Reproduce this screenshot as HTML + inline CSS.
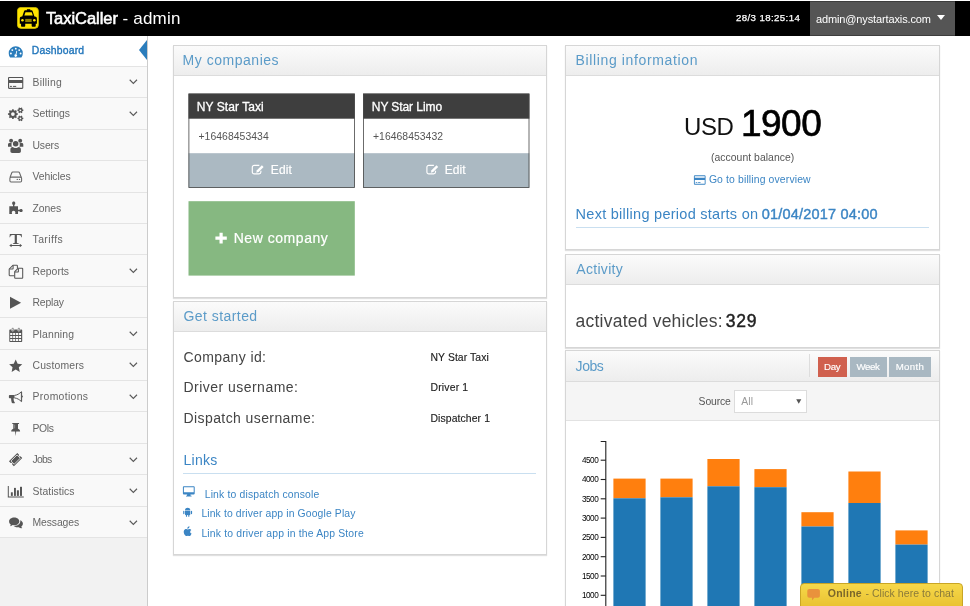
<!DOCTYPE html>
<html lang="en"><head><meta charset="utf-8"><title>TaxiCaller - admin</title>
<style>
html,body{margin:0;padding:0;}
body{width:970px;height:606px;overflow:hidden;background:#fff;font-family:"Liberation Sans",sans-serif;position:relative;}
.abs{position:absolute;}
.t{position:absolute;white-space:nowrap;line-height:1;}
#top{z-index:5;position:absolute;left:0;top:1px;width:970px;height:35px;background:#000;}
#user{position:absolute;left:810px;top:0;width:144.5px;height:35px;background:#555;box-sizing:border-box;border-top:1px solid #3d3d3d;border-bottom:1px solid #3d3d3d;}
#caret{position:absolute;left:936.6px;top:14px;width:0;height:0;border-left:4.6px solid transparent;border-right:4.6px solid transparent;border-top:5.6px solid #fff;}
#logo{position:absolute;left:17.2px;top:6px;width:21.8px;height:21.8px;}
#side{position:absolute;left:0;top:35px;width:147px;height:571px;background:#f2f2f2;border-right:1px solid #ccc;}
.row{position:absolute;left:0;width:147px;height:30.46px;background:#f9f9f9;border-bottom:1px solid #e4e4e4;}
.row.act{background:#fff;}
.row svg.ic{position:absolute;left:7px;top:7.5px;width:17px;height:17px;overflow:visible;}
.row svg.ch{position:absolute;left:128.5px;top:12.6px;width:9px;height:6px;}
#tri{position:absolute;left:139px;top:4.6px;width:0;height:0;border-top:10.75px solid transparent;border-bottom:10.75px solid transparent;border-right:8.2px solid #2b7dbc;}
.panel{position:absolute;background:#fff;border:1px solid #d6d6d6;box-sizing:border-box;box-shadow:0 1px 1px rgba(0,0,0,0.12);}
.ph{position:absolute;left:0;top:0;right:0;height:29px;border-bottom:1px solid #dcdcdc;background:linear-gradient(#fbfbfb,#ededed);}
.card{position:absolute;width:167px;height:94px;box-sizing:border-box;border:1px solid #444;background:#fff;}
.card .hd{position:absolute;left:0;top:0;right:0;height:24.5px;background:#3e3e3e;}
.card .ft{position:absolute;left:0;top:58.5px;right:0;bottom:0;background:#abb9c2;}
#newc{position:absolute;left:188px;top:201px;width:167px;height:74.5px;background:#86b881;}
.hr{position:absolute;height:1px;background:#c9dff0;}
.btn{position:absolute;top:357px;height:20px;}
#tool{position:absolute;left:566px;top:382px;width:373px;height:39px;background:#f5f5f5;border-bottom:1px solid #e2e2e2;box-sizing:border-box;}
#sel{position:absolute;left:733.5px;top:390.3px;width:73px;height:23px;box-sizing:border-box;border:1px solid #dcdcdc;background:#fff;}
#chat{position:absolute;left:799.5px;top:582.5px;width:163.5px;height:30px;box-sizing:border-box;border:1px solid #c9a525;border-radius:4px 4px 0 0;background:linear-gradient(#f6d84a,#e6bd2c);}
#texts{position:absolute;left:0;top:0;z-index:10;will-change:transform;}

</style></head>
<body>
<div id="side"></div>
<div id="top"><div id="user"></div><div id="caret"></div>
<svg id="logo" viewBox="0 0 22 22"><rect x="0.4" y="0.4" width="21.2" height="21.2" rx="3.6" fill="#ffe500" stroke="#d4bf00" stroke-width=".8"/>
<path d="M10 2.300h3.400v1h1.300c.5 0 .8.200 1 .7l1.900 5.500h.5c1.100 0 2 .9 2 2v5.400h-1.200v2.100c0 .6-.4 1-1 1h-2.100c-.6 0-1-.4-1-1v-2.100H8.300v2.100c0 .6-.4 1-1 1H5.100c-.6 0-1-.4-1-1v-2.100H2.800v-5.400c0-1.100.9-2 2-2h.5l1.900-5.500c.2-.5.500-.7 1-.7H10z" fill="#000"/>
<path d="M8.500 5.200h6.400l1.100 3.300H7.400z" fill="#ffe500"/><circle cx="5.500" cy="13.400" r="1.300" fill="#ffe500"/><circle cx="17.500" cy="13.400" r="1.300" fill="#ffe500"/><rect x="8.300" y="12" width="6.500" height="3.200" fill="#8f7f00"/></svg>
</div>
<div class="row act" style="top:35px;height:31px;color:#2b7dbc;"><svg class="ic" style="top:7.50px" viewBox="0 0 17 17" fill="currentColor"><g transform="translate(0 -0.4)"><path d="M1.700 10.700a7.050 7.050 0 0 1 14.100 0c0 1.500-.45 2.900-1.200 4.050a.6.600 0 0 1-.5.250H3.400a.6.600 0 0 1-.5-.25C2.150 13.600 1.700 12.200 1.700 10.700z"/><g fill="#fff"><circle cx="3.900" cy="10.900" r=".95"/><circle cx="5.300" cy="7.500" r=".95"/><circle cx="8.750" cy="6.050" r=".95"/><circle cx="12.200" cy="7.500" r=".95"/><circle cx="13.600" cy="10.900" r=".95"/><path d="M9.400 8.100l.8.200-.75 3.500a1.350 1.350 0 1 1-.85-.2z"/></g></g></svg><div id="tri" style="top:4.60px"></div></div>
<div class="row" style="top:67px;height:30px;color:#555;"><svg class="ic" style="top:6.96px" viewBox="0 0 17 17" fill="currentColor"><path fill-rule="evenodd" d="M2.200 2.900h12.900c.7 0 1.200.5 1.200 1.200v9.600c0 .7-.5 1.200-1.200 1.200H2.200c-.7 0-1.200-.5-1.200-1.200V4.100c0-.7.500-1.200 1.200-1.200zM2.100 4v2h13.100V4zM2.100 8.900v4.900h13.100V8.900z"/><rect x="2.900" y="11.900" width="2" height="1"/><rect x="5.900" y="11.900" width="3.300" height="1"/></svg><svg class="ch" style="top:12.06px" viewBox="0 0 9 6"><path d="M0.700 0.750L4.350 4.400L8 0.750" fill="none" stroke="#5a5a5a" stroke-width="1.100"/></svg></div>
<div class="row" style="top:98px;height:31px;color:#555;"><svg class="ic" style="top:7.42px" viewBox="0 0 17 17" fill="currentColor"><path fill-rule="evenodd" d="M9.70 8.23L10.84 8.33L10.84 9.87L9.70 9.97L9.20 11.17L9.94 12.05L8.85 13.14L7.97 12.40L6.77 12.90L6.67 14.04L5.13 14.04L5.03 12.90L3.83 12.40L2.95 13.14L1.86 12.05L2.60 11.17L2.10 9.97L0.96 9.87L0.96 8.33L2.10 8.23L2.60 7.03L1.86 6.15L2.95 5.06L3.83 5.80L5.03 5.30L5.13 4.16L6.67 4.16L6.77 5.30L7.97 5.80L8.85 5.06L9.94 6.15L9.20 7.03ZM4.05 9.10a1.85 1.85 0 1 0 3.7 0a1.85 1.85 0 1 0 -3.7 0Z"/><path fill-rule="evenodd" d="M15.53 4.56L16.32 4.61L16.32 5.99L15.53 6.04L15.10 6.77L15.45 7.49L14.27 8.17L13.82 7.51L12.98 7.51L12.53 8.17L11.35 7.49L11.70 6.77L11.27 6.04L10.48 5.99L10.48 4.61L11.27 4.56L11.70 3.83L11.35 3.11L12.53 2.43L12.98 3.09L13.82 3.09L14.27 2.43L15.45 3.11L15.10 3.83ZM12.50 5.30a0.9 0.9 0 1 0 1.8 0a0.9 0.9 0 1 0 -1.8 0Z"/><path fill-rule="evenodd" d="M15.53 12.66L16.32 12.71L16.32 14.09L15.53 14.14L15.10 14.87L15.45 15.59L14.27 16.27L13.82 15.61L12.98 15.61L12.53 16.27L11.35 15.59L11.70 14.87L11.27 14.14L10.48 14.09L10.48 12.71L11.27 12.66L11.70 11.93L11.35 11.21L12.53 10.53L12.98 11.19L13.82 11.19L14.27 10.53L15.45 11.21L15.10 11.93ZM12.50 13.40a0.9 0.9 0 1 0 1.8 0a0.9 0.9 0 1 0 -1.8 0Z"/></svg><svg class="ch" style="top:12.52px" viewBox="0 0 9 6"><path d="M0.700 0.750L4.350 4.400L8 0.750" fill="none" stroke="#5a5a5a" stroke-width="1.100"/></svg></div>
<div class="row" style="top:130px;height:30px;color:#555;"><svg class="ic" style="top:6.88px" viewBox="0 0 17 17" fill="currentColor"><circle cx="4.100" cy="3.700" r="1.950"/><circle cx="13.200" cy="3.700" r="1.950"/><path d="M1 9.700V7.600c0-.8.600-1.500 1.400-1.500h1.300c.5 0 .9.200 1.200.5-.6 1-.5 2.100 0 3.100z"/><path d="M16.300 9.700V7.600c0-.8-.6-1.500-1.400-1.500h-1.300c-.5 0-.9.200-1.200.5.600 1 .5 2.100 0 3.100z"/><circle cx="8.650" cy="6.700" r="2.750"/><path d="M3.400 14.300v-2c0-1.400.9-2.400 2.200-2.400.3 0 1.500 1.100 3.050 1.100s2.750-1.100 3.050-1.100c1.300 0 2.200 1 2.200 2.400v2c0 1-.8 1.700-1.700 1.700H5.100c-.9 0-1.700-.7-1.700-1.700z"/></svg></div>
<div class="row" style="top:161px;height:31px;color:#555;"><svg class="ic" style="top:7.34px" viewBox="0 0 17 17" fill="currentColor"><g fill="none" stroke="#666" stroke-width="1.050"><path d="M3.100 9.200l1.700-4.500c.2-.5.500-.700 1-.7h5.700c.5 0 .8.200 1 .7l1.700 4.500"/><rect x="2.900" y="9.100" width="11.700" height="4.800" rx="1.100"/></g><circle cx="10.300" cy="11.400" r=".7" fill="#666"/><circle cx="12.500" cy="11.400" r=".7" fill="#666"/></svg></div>
<div class="row" style="top:193px;height:30px;color:#555;"><svg class="ic" style="top:6.80px" viewBox="0 0 17 17" fill="currentColor"><path d="M2.300 6.200h3.700V5c-.6-.4-.9-1-.9-1.700 0-1 .7-1.700 1.600-1.700s1.600.7 1.600 1.700c0 .7-.3 1.300-.9 1.700v1.200H11v3.600h1.400c.4-.6.900-.9 1.600-.9 1 0 1.700.7 1.700 1.600s-.7 1.600-1.700 1.600c-.7 0-1.200-.3-1.600-.9H11V14H8.100c.2-.4.300-.8.300-1.200 0-1.200-.8-2-1.800-2s-1.800.8-1.800 2c0 .4.100.8.300 1.200H2.300z"/></svg></div>
<div class="row" style="top:224px;height:30px;color:#555;"><svg class="ic" style="top:7.26px" viewBox="0 0 17 17" fill="currentColor"><path d="M2.500 6.300l.35-3.300h11.800l.35 3.300h-.6c-.3-1.600-.9-2.300-2.400-2.300H9.900v7.200c0 .8.300 1 1.800 1.100v.6H5.900v-.6c1.500-.1 1.800-.3 1.800-1.100V4H5.500C4 4 3.400 4.700 3.100 6.300z"/><path d="M2.300 14.500l2.300-1.700v1.200h8.200v-1.200l2.300 1.700-2.300 1.700V15H4.600v1.200z"/></svg></div>
<div class="row" style="top:255px;height:31px;color:#555;"><svg class="ic" style="top:7.72px" viewBox="0 0 17 17" fill="currentColor"><g fill="none" stroke="#555" stroke-width="1.050" stroke-linejoin="round"><path d="M7.400 12.700H2.800c-.4 0-.6-.2-.6-.6V6l3.700-3.700h3.900c.4 0 .6.200.6.600v2.500"/><path d="M2.400 6h3.300c.3 0 .4-.1.400-.4V2.500"/><path d="M7.700 8.700L11.200 5.200h3.900c.4 0 .6.200.6.600v8.900c0 .4-.2.600-.6.600H8.300c-.4 0-.6-.2-.6-.6z"/><path d="M7.900 8.900h3.100c.3 0 .4-.1.400-.4V5.400"/></g></svg><svg class="ch" style="top:12.82px" viewBox="0 0 9 6"><path d="M0.700 0.750L4.350 4.400L8 0.750" fill="none" stroke="#5a5a5a" stroke-width="1.100"/></svg></div>
<div class="row" style="top:287px;height:30px;color:#555;"><svg class="ic" style="top:7.18px" viewBox="0 0 17 17" fill="currentColor"><path d="M3 2.800L14.100 8.800L3 14.800z"/></svg></div>
<div class="row" style="top:318px;height:31px;color:#555;"><svg class="ic" style="top:7.64px" viewBox="0 0 17 17" fill="currentColor"><path fill-rule="evenodd" d="M3.300 3.400h10.900c.6 0 1 .4 1 1V15c0 .6-.4 1-1 1H3.300c-.6 0-1-.4-1-1V4.400c0-.6.400-1 1-1zM3.2 6.9h2.200v2.200h-2.200zM6.1 6.9h2.200v2.200h-2.200zM9.0 6.9h2.200v2.200h-2.200zM11.9 6.9h2.200v2.200h-2.200zM3.2 9.9h2.200v2.200h-2.200zM6.1 9.9h2.200v2.200h-2.200zM9.0 9.9h2.200v2.200h-2.200zM11.9 9.9h2.200v2.200h-2.200zM3.2 12.9h2.200v2.200h-2.200zM6.1 12.9h2.200v2.200h-2.200zM9.0 12.9h2.200v2.200h-2.200zM11.9 12.9h2.200v2.200h-2.200z"/><rect x="4.600" y="1.800" width="2.300" height="3.500" rx="1.100" fill="#555" stroke="#f9f9f9" stroke-width=".5"/><rect x="10.700" y="1.800" width="2.300" height="3.500" rx="1.100" fill="#555" stroke="#f9f9f9" stroke-width=".5"/><rect x="5.300" y="2.600" width=".9" height="2" rx=".4" fill="#f9f9f9"/><rect x="11.400" y="2.600" width=".9" height="2" rx=".4" fill="#f9f9f9"/></svg><svg class="ch" style="top:12.74px" viewBox="0 0 9 6"><path d="M0.700 0.750L4.350 4.400L8 0.750" fill="none" stroke="#5a5a5a" stroke-width="1.100"/></svg></div>
<div class="row" style="top:350px;height:30px;color:#555;"><svg class="ic" style="top:7.10px" viewBox="0 0 17 17" fill="currentColor"><path d="M8.70 2.40L10.64 6.63L15.26 7.17L11.84 10.32L12.76 14.88L8.70 12.60L4.64 14.88L5.56 10.32L2.14 7.17L6.76 6.63Z"/></svg><svg class="ch" style="top:12.20px" viewBox="0 0 9 6"><path d="M0.700 0.750L4.350 4.400L8 0.750" fill="none" stroke="#5a5a5a" stroke-width="1.100"/></svg></div>
<div class="row" style="top:381px;height:30px;color:#555;"><svg class="ic" style="top:7.56px" viewBox="0 0 17 17" fill="currentColor"><path d="M2.900 6h4.600v3.300H2.900c-.6 0-1-.4-1-1V7c0-.6.400-1 1-1z"/><path d="M4.100 9.100h2.500c0 1.700.2 3.200 1.200 4.400.3.400 0 .8-.5.800H5.700c-.5 0-.8-.2-1-.7-.5-1.500-.6-3-.6-4.500z"/><path d="M7.500 6.400c2.700-.3 4.900-1.700 6.900-3.600v9.700c-2-1.900-4.200-3.300-6.900-3.600" fill="none" stroke="#555" stroke-width="1"/><path d="M14.400 2.400c.4 0 .7.300.7.700v3.500c.5.100.8.500.8 1s-.3.900-.8 1v3.600c0 .4-.3.700-.7.700z"/></svg><svg class="ch" style="top:12.66px" viewBox="0 0 9 6"><path d="M0.700 0.750L4.350 4.400L8 0.750" fill="none" stroke="#5a5a5a" stroke-width="1.100"/></svg></div>
<div class="row" style="top:412px;height:31px;color:#555;"><svg class="ic" style="top:8.02px" viewBox="0 0 17 17" fill="currentColor"><path d="M5.500 3h6.300c.4 0 .4 1.100 0 1.100h-.8v4.700c1.300.6 2.100 1.500 2.100 2.500 0 .2-.1.300-.3.300H9.200l-.5 4.100h-.1l-.5-4.100H4.500c-.2 0-.3-.1-.3-.3 0-1 .8-1.900 2.100-2.500V4.100h-.8c-.4 0-.4-1.100 0-1.100z"/><rect x="7.300" y="4.600" width=".8" height="3.800" fill="#999"/></svg></div>
<div class="row" style="top:444px;height:30px;color:#555;"><svg class="ic" style="top:7.48px" viewBox="0 0 17 17" fill="currentColor"><g transform="translate(8.600 8.600) rotate(-45)"><path d="M-5.900 -3.500H5.900V-1a1 1 0 0 0 0 2V3.500H-5.900V1a1 1 0 0 0 0-2z"/><rect x="-4.300" y="-2.300" width="8.600" height="4.600" fill="none" stroke="#f9f9f9" stroke-width=".75"/></g></svg><svg class="ch" style="top:12.58px" viewBox="0 0 9 6"><path d="M0.700 0.750L4.350 4.400L8 0.750" fill="none" stroke="#5a5a5a" stroke-width="1.100"/></svg></div>
<div class="row" style="top:475px;height:31px;color:#555;"><svg class="ic" style="top:7.94px" viewBox="0 0 17 17" fill="currentColor"><path d="M.800 2.900h1v10.700h15v1H.800z"/><rect x="3.900" y="9.300" width="1.900" height="3.600"/><rect x="7" y="4.900" width="1.900" height="8"/><rect x="9.900" y="7.300" width="2" height="5.600"/><rect x="13" y="3.800" width="2" height="9.100"/></svg><svg class="ch" style="top:13.04px" viewBox="0 0 9 6"><path d="M0.700 0.750L4.350 4.400L8 0.750" fill="none" stroke="#5a5a5a" stroke-width="1.100"/></svg></div>
<div class="row" style="top:507px;height:30px;color:#555;"><svg class="ic" style="top:7.40px" viewBox="0 0 17 17" fill="currentColor"><path d="M14.500 14.300c-1.200-.1-2-.5-2.600-1.100-.5.100-1 .15-1.500.15-1.700 0-3.200-.6-4.100-1.500.3 0 .6.050.9.050 3.400 0 6.100-2.100 6.100-4.700 0-.3 0-.6-.1-.9 1.600.7 2.700 1.900 2.700 3.400 0 1.100-.6 2-1.600 2.700.1.700.5 1.300 1 1.700z"/><path d="M7.200 3.600c2.800 0 5.100 1.700 5.100 3.800s-2.300 3.800-5.100 3.800c-.5 0-1-.05-1.500-.15-.7.700-1.600 1.100-2.800 1.300.5-.5.800-1.100.9-1.900C2.700 9.800 2.100 8.700 2.100 7.400c0-2.100 2.300-3.800 5.100-3.800z"/></svg><svg class="ch" style="top:12.50px" viewBox="0 0 9 6"><path d="M0.700 0.750L4.350 4.400L8 0.750" fill="none" stroke="#5a5a5a" stroke-width="1.100"/></svg></div>
<div class="panel" style="left:173px;top:45px;width:374px;height:253px;"><div class="ph"></div></div>
<div class="panel" style="left:173px;top:301px;width:374px;height:254px;"><div class="ph"></div></div>
<div class="panel" style="left:565px;top:45px;width:375px;height:205px;"><div class="ph"></div></div>
<div class="panel" style="left:565px;top:254px;width:375px;height:94px;"><div class="ph"></div></div>
<div class="panel" style="left:565px;top:350px;width:375px;height:300px;"><div class="ph" style="height:30px"></div></div>

<div class="hr" style="left:183px;top:473px;width:353px;"></div>
<div class="hr" style="left:576px;top:227px;width:353px;"></div>

<div id="tool"></div>
<div id="sel"></div>
<div class="abs" style="left:809px;top:354px;width:1px;height:23px;background:#ddd;"></div>
<div class="btn" style="left:817.5px;width:29px;background:#d0604e;"></div>
<div class="btn" style="left:850px;width:36.700px;background:#a9b8c2;"></div>
<div class="btn" style="left:889.2px;width:41.500px;background:#a9b8c2;"></div>
<svg class="abs" style="left:0;top:0;" width="970" height="606" viewBox="0 0 970 606"><rect x="613.4" y="478.6" width="32.200" height="19.7" fill="#ff7f0e"/><rect x="613.4" y="498.3" width="32.200" height="141.7" fill="#1f77b4"/><rect x="660.4" y="478.6" width="32.200" height="18.7" fill="#ff7f0e"/><rect x="660.4" y="497.3" width="32.200" height="142.7" fill="#1f77b4"/><rect x="707.4" y="459.0" width="32.200" height="27.3" fill="#ff7f0e"/><rect x="707.4" y="486.3" width="32.200" height="153.7" fill="#1f77b4"/><rect x="754.4" y="469.1" width="32.200" height="18.1" fill="#ff7f0e"/><rect x="754.4" y="487.2" width="32.200" height="152.8" fill="#1f77b4"/><rect x="801.4" y="512.2" width="32.200" height="14.3" fill="#ff7f0e"/><rect x="801.4" y="526.5" width="32.200" height="113.5" fill="#1f77b4"/><rect x="848.4" y="471.5" width="32.200" height="31.5" fill="#ff7f0e"/><rect x="848.4" y="503.0" width="32.200" height="137.0" fill="#1f77b4"/><rect x="895.4" y="530.4" width="32.200" height="14.2" fill="#ff7f0e"/><rect x="895.4" y="544.6" width="32.200" height="95.4" fill="#1f77b4"/><path d="M600.700 441.500H605.800V640" fill="none" stroke="#222" stroke-width="1.100"/><path d="M600.700 595.3H605.800" stroke="#222" stroke-width="1.100"/><path d="M600.700 576.0H605.800" stroke="#222" stroke-width="1.100"/><path d="M600.700 556.7H605.800" stroke="#222" stroke-width="1.100"/><path d="M600.700 537.4H605.800" stroke="#222" stroke-width="1.100"/><path d="M600.700 518.1H605.800" stroke="#222" stroke-width="1.100"/><path d="M600.700 498.8H605.800" stroke="#222" stroke-width="1.100"/><path d="M600.700 479.5H605.800" stroke="#222" stroke-width="1.100"/><path d="M600.700 460.2H605.800" stroke="#222" stroke-width="1.100"/></svg><svg class="abs" style="left:0;top:0;z-index:8;" width="970" height="606" viewBox="0 0 970 606"><g transform="translate(0 0)"><rect x="188.500" y="93.600" width="166.300" height="94.200" fill="#fff"/><rect x="188.500" y="93.600" width="166.300" height="25.100" fill="#3e3e3e"/><rect x="188.500" y="153.200" width="166.300" height="34.600" fill="#abb9c2"/><rect x="188.900" y="94" width="165.500" height="93.400" fill="none" stroke="#474747" stroke-width=".8"/></g><g transform="translate(174.6 0)"><rect x="188.500" y="93.600" width="166.300" height="94.200" fill="#fff"/><rect x="188.500" y="93.600" width="166.300" height="25.100" fill="#3e3e3e"/><rect x="188.500" y="153.200" width="166.300" height="34.600" fill="#abb9c2"/><rect x="188.900" y="94" width="165.500" height="93.400" fill="none" stroke="#474747" stroke-width=".8"/></g><rect x="188.500" y="201.200" width="166.300" height="74.400" fill="#86b881"/><g transform="translate(0 0)"><path d="M259.300 165.400H254.200a1.900 1.900 0 0 0-1.900 1.900V172a1.900 1.900 0 0 0 1.900 1.900H259a1.900 1.900 0 0 0 1.900-1.900V170.700" fill="none" stroke="#fff" stroke-width="1.150"/><path d="M261.900 165.300l1.700 1.700-5 5-2.400.7.700-2.400z" fill="#fff"/></g><g transform="translate(174.6 0)"><path d="M259.300 165.400H254.200a1.900 1.900 0 0 0-1.900 1.900V172a1.900 1.900 0 0 0 1.900 1.900H259a1.900 1.900 0 0 0 1.900-1.900V170.700" fill="none" stroke="#fff" stroke-width="1.150"/><path d="M261.900 165.300l1.700 1.700-5 5-2.400.7.700-2.400z" fill="#fff"/></g><path d="M219.500 232.800h3.200v3.700h4.100v3.200h-4.100v3.800h-3.200v-3.800h-4.100v-3.200h4.100z" fill="#fff"/><path fill-rule="evenodd" fill="#3b85c4" d="M694.800 175.300h9.900c.5 0 .9.400.9.900v7.600c0 .5-.4.900-.9.900h-9.900c-.5 0-.9-.4-.9-.9v-7.600c0-.5.400-.9.900-.9zM694.800 176.200v1.500h9.900v-1.500zM694.800 179.900v3.900h9.900v-3.900z"/><rect x="695.700" y="182" width="1.600" height=".8" fill="#3b85c4"/><rect x="698.100" y="182" width="2.400" height=".8" fill="#3b85c4"/><path fill-rule="evenodd" fill="#3b85c4" d="M183.800 486.200h10c.5 0 .9.400.9.900v6.500c0 .5-.4.900-.9.900h-3.400l.3 1.300h.9v.8h-5.600v-.8h.9l.3-1.300h-3.400c-.5 0-.9-.4-.9-.9v-6.500c0-.5.400-.9.900-.9zM183.900 487.200v5h9.800v-5z"/><path fill="#3b85c4" d="M185 510.300a2.650 2.600 0 0 1 5.300 0zM185 510.700h5.300v3.700c0 .3-.2.500-.5.500h-.4v1.300a.6.600 0 0 1-1.200 0v-1.300h-1.100v1.300a.6.600 0 0 1-1.200 0v-1.300h-.4c-.3 0-.5-.2-.5-.5zM183.200 511.300a.6.600 0 0 1 1.200 0v2.300a.6.600 0 0 1-1.200 0zM190.900 511.300a.6.600 0 0 1 1.200 0v2.300a.6.600 0 0 1-1.200 0z"/><path fill="#3b85c4" d="M189.500 526.300c.1.700-.2 1.300-.6 1.700-.4.500-1 .8-1.600.7-.1-.6.200-1.300.6-1.700.4-.4 1.100-.7 1.600-.7zM191.300 529.900c-.7.400-1.100 1-1.100 1.800 0 .9.500 1.600 1.400 1.900-.2.600-.5 1.100-.9 1.600-.4.500-.8.900-1.400.9-.6 0-.8-.4-1.500-.4s-.9.400-1.500.4-1-.5-1.400-1c-.9-1.100-1.500-3-1-4.400.4-1 1.300-1.700 2.300-1.700.6 0 1.200.4 1.600.4.400 0 1.100-.5 1.900-.4.600 0 1.200.3 1.600.9z"/><path fill="#e9923c" d="M809.300 589h8.600c1.100 0 2 .9 2 2v4.700c0 1.100-.9 2-2 2h-3.600l-2.300 2.700v-2.700h-2.700c-1.100 0-2-.9-2-2V591c0-1.100.9-2 2-2z"/><path fill="#555" d="M796.200 399.200h5.100l-2.550 4.600z"/></svg>
<div id="chat"></div>

<div id="texts">
<span class="t" id="t0" style="left:45.90px;top:9.93px;font-size:16.5px;color:#fff;-webkit-text-stroke:0.55px #fff;letter-spacing:-0.04px;">TaxiCaller</span>
<span class="t" id="t1" style="left:122.50px;top:9.51px;font-size:17px;color:#fff;letter-spacing:0.20px;">- admin</span>
<span class="t" id="t2" style="left:736.00px;top:12.89px;font-size:9.7px;color:#fff;-webkit-text-stroke:0.25px #fff;letter-spacing:0.38px;">28/3 18:25:14</span>
<span class="t" id="t3" style="left:815.90px;top:14.39px;font-size:11px;color:#fff;letter-spacing:-0.12px;">admin@nystartaxis.com</span>
<span class="t" id="t4" style="left:31.83px;top:46.00px;font-size:10.4px;color:#2075bb;-webkit-text-stroke:0.35px #2075bb;letter-spacing:0.18px;">Dashboard</span>
<span class="t" id="t5" style="left:32.50px;top:78.06px;font-size:10.4px;color:#666;letter-spacing:0.25px;">Billing</span>
<span class="t" id="t6" style="left:32.50px;top:108.52px;font-size:10.4px;color:#666;">Settings</span>
<span class="t" id="t7" style="left:32.50px;top:140.98px;font-size:10.4px;color:#666;letter-spacing:-0.14px;">Users</span>
<span class="t" id="t8" style="left:32.50px;top:172.44px;font-size:10.4px;color:#666;letter-spacing:-0.09px;">Vehicles</span>
<span class="t" id="t9" style="left:32.50px;top:203.90px;font-size:10.4px;color:#666;letter-spacing:-0.06px;">Zones</span>
<span class="t" id="t10" style="left:32.50px;top:235.36px;font-size:10.4px;color:#666;letter-spacing:0.44px;">Tariffs</span>
<span class="t" id="t11" style="left:32.50px;top:266.82px;font-size:10.4px;color:#666;letter-spacing:0.02px;">Reports</span>
<span class="t" id="t12" style="left:32.50px;top:298.28px;font-size:10.4px;color:#666;letter-spacing:-0.16px;">Replay</span>
<span class="t" id="t13" style="left:32.50px;top:329.74px;font-size:10.4px;color:#666;letter-spacing:0.15px;">Planning</span>
<span class="t" id="t14" style="left:32.50px;top:361.20px;font-size:10.4px;color:#666;letter-spacing:0.16px;">Customers</span>
<span class="t" id="t15" style="left:32.50px;top:391.66px;font-size:10.4px;color:#666;letter-spacing:0.32px;">Promotions</span>
<span class="t" id="t16" style="left:32.50px;top:424.12px;font-size:10.4px;color:#666;letter-spacing:-0.55px;">POIs</span>
<span class="t" id="t17" style="left:32.50px;top:454.58px;font-size:10.4px;color:#666;letter-spacing:-0.76px;">Jobs</span>
<span class="t" id="t18" style="left:32.50px;top:487.04px;font-size:10.4px;color:#666;letter-spacing:0.04px;">Statistics</span>
<span class="t" id="t19" style="left:32.50px;top:517.50px;font-size:10.4px;color:#666;letter-spacing:-0.11px;">Messages</span>
<span class="t" id="t20" style="left:182.60px;top:53.05px;font-size:14px;color:#5b9bc8;letter-spacing:0.52px;">My companies</span>
<span class="t" id="t21" style="left:575.60px;top:53.05px;font-size:14px;color:#5b9bc8;letter-spacing:0.63px;">Billing information</span>
<span class="t" id="t22" style="left:183.50px;top:309.15px;font-size:14px;color:#5b9bc8;letter-spacing:0.44px;">Get started</span>
<span class="t" id="t23" style="left:576.30px;top:261.55px;font-size:14px;color:#5b9bc8;letter-spacing:0.31px;">Activity</span>
<span class="t" id="t24" style="left:575.60px;top:358.95px;font-size:14px;color:#5b9bc8;letter-spacing:-0.44px;">Jobs</span>
<span class="t" id="t25" style="left:183.50px;top:452.85px;font-size:14px;color:#3b85c4;letter-spacing:0.29px;">Links</span>
<span class="t" id="t26" style="left:196.85px;top:100.84px;font-size:12px;color:#fff;-webkit-text-stroke:0.3px #fff;letter-spacing:0.06px;">NY Star Taxi</span>
<span class="t" id="t27" style="left:371.80px;top:100.84px;font-size:12px;color:#fff;-webkit-text-stroke:0.3px #fff;letter-spacing:-0.08px;">NY Star Limo</span>
<span class="t" id="t28" style="left:198.50px;top:132.20px;font-size:10.4px;color:#555;letter-spacing:0.05px;">+16468453434</span>
<span class="t" id="t29" style="left:373.00px;top:132.20px;font-size:10.4px;color:#555;letter-spacing:0.03px;">+16468453432</span>
<span class="t" id="t30" style="left:270.80px;top:164.24px;font-size:12px;color:#fff;-webkit-text-stroke:0.2px #fff;letter-spacing:0.09px;">Edit</span>
<span class="t" id="t31" style="left:444.70px;top:164.24px;font-size:12px;color:#fff;-webkit-text-stroke:0.2px #fff;letter-spacing:0.09px;">Edit</span>
<span class="t" id="t32" style="left:233.70px;top:231.25px;font-size:14px;color:#fff;-webkit-text-stroke:0.2px #fff;letter-spacing:0.54px;">New company</span>
<span class="t" id="t33" style="left:183.50px;top:350.15px;font-size:14px;color:#444;letter-spacing:0.39px;">Company id:</span>
<span class="t" id="t34" style="left:183.50px;top:379.55px;font-size:14px;color:#444;letter-spacing:0.47px;">Driver username:</span>
<span class="t" id="t35" style="left:183.50px;top:411.35px;font-size:14px;color:#444;letter-spacing:0.41px;">Dispatch username:</span>
<span class="t" id="t36" style="left:430.53px;top:353.00px;font-size:10.4px;color:#222;-webkit-text-stroke:0.15px #222;letter-spacing:0.08px;">NY Star Taxi</span>
<span class="t" id="t37" style="left:430.53px;top:382.60px;font-size:10.4px;color:#222;-webkit-text-stroke:0.15px #222;letter-spacing:0.18px;">Driver 1</span>
<span class="t" id="t38" style="left:430.53px;top:414.10px;font-size:10.4px;color:#222;-webkit-text-stroke:0.15px #222;letter-spacing:0.10px;">Dispatcher 1</span>
<span class="t" id="t39" style="left:204.70px;top:489.80px;font-size:10.4px;color:#3b85c4;letter-spacing:0.16px;">Link to dispatch console</span>
<span class="t" id="t40" style="left:201.40px;top:509.20px;font-size:10.4px;color:#3b85c4;letter-spacing:0.12px;">Link to driver app in Google Play</span>
<span class="t" id="t41" style="left:201.40px;top:528.90px;font-size:10.4px;color:#3b85c4;letter-spacing:0.17px;">Link to driver app in the App Store</span>
<span class="t" id="t42" style="left:684.00px;top:115.28px;font-size:24px;color:#111;letter-spacing:-0.38px;">USD</span>
<span class="t" id="t43" style="left:740.88px;top:105.48px;font-size:37px;color:#000;-webkit-text-stroke:0.65px #000;letter-spacing:-0.46px;">1900</span>
<span class="t" id="t44" style="left:710.90px;top:153.20px;font-size:10.4px;color:#555;letter-spacing:0.05px;">(account balance)</span>
<span class="t" id="t45" style="left:708.90px;top:174.70px;font-size:10.4px;color:#3b85c4;letter-spacing:0.14px;">Go to billing overview</span>
<span class="t" id="t46" style="left:575.60px;top:207.43px;font-size:14.5px;color:#3b85c4;letter-spacing:0.27px;">Next billing period starts on</span>
<span class="t" id="t47" style="left:761.70px;top:207.43px;font-size:14.5px;color:#3b85c4;-webkit-text-stroke:0.4px #3b85c4;letter-spacing:0.20px;">01/04/2017 04:00</span>
<span class="t" id="t48" style="left:575.60px;top:313.19px;font-size:17.5px;color:#444;letter-spacing:0.22px;">activated vehicles:</span>
<span class="t" id="t49" style="left:725.80px;top:313.19px;font-size:17.5px;color:#222;-webkit-text-stroke:0.45px #222;letter-spacing:0.72px;">329</span>
<span class="t" id="t50" style="left:824.00px;top:362.49px;font-size:9.7px;color:#fff;-webkit-text-stroke:0.15px #fff;letter-spacing:-0.29px;">Day</span>
<span class="t" id="t51" style="left:856.50px;top:362.49px;font-size:9.7px;color:#fff;-webkit-text-stroke:0.15px #fff;letter-spacing:-0.42px;">Week</span>
<span class="t" id="t52" style="left:895.70px;top:362.49px;font-size:9.7px;color:#fff;-webkit-text-stroke:0.15px #fff;letter-spacing:0.30px;">Month</span>
<span class="t" id="t53" style="left:698.60px;top:396.70px;font-size:10.4px;color:#555;letter-spacing:-0.13px;">Source</span>
<span class="t" id="t54" style="left:741.20px;top:396.70px;font-size:10.4px;color:#999;letter-spacing:0.13px;">All</span>
<span class="t" id="t55" style="left:581.90px;top:592.26px;font-size:8.2px;color:#000;letter-spacing:-0.46px;">1000</span>
<span class="t" id="t56" style="left:581.90px;top:572.96px;font-size:8.2px;color:#000;letter-spacing:-0.46px;">1500</span>
<span class="t" id="t57" style="left:581.90px;top:553.66px;font-size:8.2px;color:#000;letter-spacing:-0.46px;">2000</span>
<span class="t" id="t58" style="left:581.90px;top:534.36px;font-size:8.2px;color:#000;letter-spacing:-0.46px;">2500</span>
<span class="t" id="t59" style="left:581.90px;top:515.06px;font-size:8.2px;color:#000;letter-spacing:-0.46px;">3000</span>
<span class="t" id="t60" style="left:581.90px;top:495.76px;font-size:8.2px;color:#000;letter-spacing:-0.46px;">3500</span>
<span class="t" id="t61" style="left:581.90px;top:476.46px;font-size:8.2px;color:#000;letter-spacing:-0.46px;">4000</span>
<span class="t" id="t62" style="left:581.90px;top:457.16px;font-size:8.2px;color:#000;letter-spacing:-0.46px;">4500</span>
<span class="t" id="t63" style="left:827.80px;top:588.41px;font-size:10.5px;color:#7a662a;font-weight:bold;letter-spacing:0.24px;">Online</span>
<span class="t" id="t64" style="left:865.40px;top:588.41px;font-size:10.5px;color:#8a7a3a;letter-spacing:0.05px;">- Click here to chat</span>
</div>
</body></html>
